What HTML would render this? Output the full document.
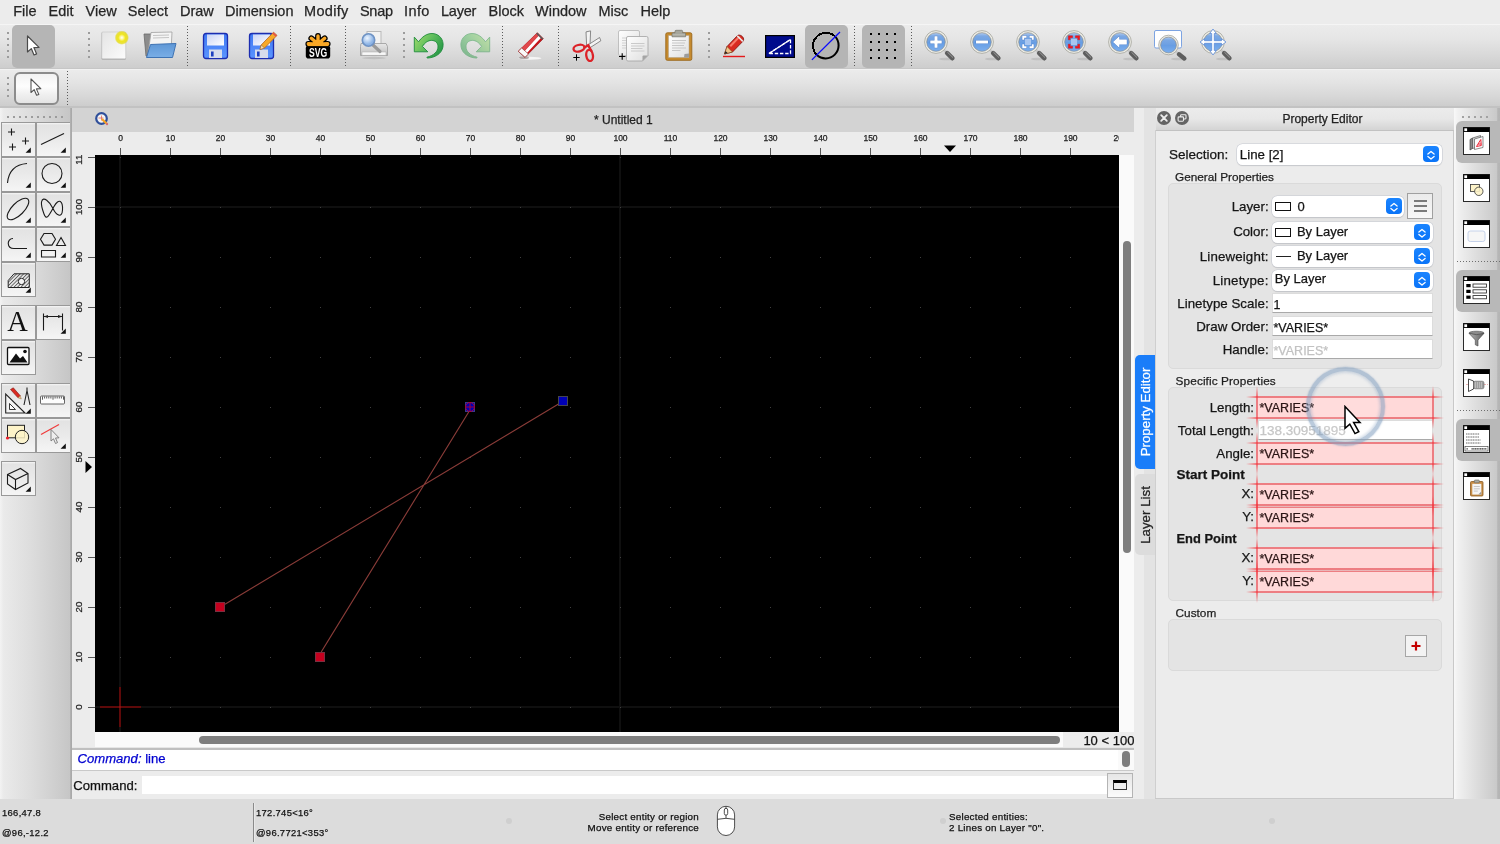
<!DOCTYPE html>
<html>
<head>
<meta charset="utf-8">
<title>QCAD</title>
<style>
*{box-sizing:border-box;margin:0;padding:0}
html,body{width:1500px;height:844px;overflow:hidden;background:#ececec;font-family:"Liberation Sans",sans-serif;color:#222;-webkit-text-stroke:.25px}
.abs{position:absolute}
#root{position:relative;width:1500px;height:844px;overflow:hidden;will-change:transform}
/* menu */
#menubar{left:0;top:0;width:1500px;height:24px;background:#ececec}
#menubar span{position:absolute;top:3px;font-size:14.5px;color:#262626;white-space:nowrap}
/* toolbars */
#tb1{left:0;top:24px;width:1500px;height:45px;background:linear-gradient(#ececec,#e5e5e5 35%,#d8d8d8 72%,#cdcdcd);border-bottom:1px solid #c6c6c6;box-shadow:inset 0 1px 0 #f5f5f5}
#tb2{left:0;top:69px;width:1500px;height:39px;background:linear-gradient(#ececec,#e4e4e4 35%,#d7d7d7 75%,#cdcdcd);border-bottom:2px solid #c2c2c2;box-shadow:inset 0 1px 0 #f2f2f2}
.sel{background:#b5b5b5;border-radius:5px}
.vdots{width:1px;background-image:repeating-linear-gradient(180deg,#5a5a5a 0,#5a5a5a 1px,transparent 1px,transparent 3px)}
.grip{width:2px;background-image:repeating-linear-gradient(180deg,#9c9c9c 0,#9c9c9c 2px,transparent 2px,transparent 6px)}
/* left panel */
#left{left:0;top:108px;width:72px;height:691px;background:linear-gradient(90deg,#f3f3f3 0,#eaeaea 5%,#dcdcdc 45%,#c6c6c6 97%)}
.tool{position:absolute;width:35px;height:35px;border:1px solid #999;background:linear-gradient(#f6f6f6 0,#e3e3e3 6%,#e9e9e9 45%,#f5f5f5 100%)}
.tool svg{position:absolute;left:0;top:0}
/* center */
#doctitle{left:72px;top:108px;width:1062px;height:24px;background:#d3d3d3}
#hruler{left:72px;top:132px;width:1047px;height:23px;background:#ececec}
#vruler{left:72px;top:155px;width:23px;height:577px;background:#ececec}
#canvas{left:95px;top:155px;width:1024px;height:577px;background:#000}
#vscroll{left:1119px;top:155px;width:15px;height:577px;background:#fafafa}
#hscroll{left:72px;top:732px;width:1062px;height:16px;background:#fafafa}
#hist{left:72px;top:748px;width:1062px;height:23px;background:#fff;border-top:2px solid #bfbfbf;border-bottom:1px solid #c9c9c9}
#cmd{left:72px;top:771px;width:1062px;height:28px;background:#ececec}
.rl{font-size:8.500px;text-align:center;color:#222;white-space:nowrap}
.rlv{font-size:9.700px;text-align:center;color:#222;white-space:nowrap;transform:rotate(-90deg);height:10px;line-height:10px}
#hruler,#vruler{overflow:hidden}
.st{font-size:9.400px;letter-spacing:.33px;color:#111;white-space:nowrap;line-height:12px}
.st2{font-size:9.800px;letter-spacing:.24px}
.dot{width:6px;height:6px;border-radius:3px;background:#cfcfcf}

#prop .lab{position:absolute;font-size:13.300px;color:#151515;white-space:nowrap;text-align:right;line-height:16px}
#prop .gl{position:absolute;font-size:11.800px;color:#1e1e1e;white-space:nowrap;line-height:14px}
#prop .gb{position:absolute;background:#e4e4e4;border:1px solid #dadada;border-radius:5px}
#prop .combo{position:absolute;background:#fff;border-radius:5.500px;box-shadow:0 0 0 .6px #c8ccd4,0 .5px 1px rgba(0,0,0,.16);font-size:13px;color:#151515;line-height:16px;white-space:nowrap}
#prop .cb{position:absolute;width:16px;height:16px;border-radius:4px;background:linear-gradient(#1a84ff,#0a74f8)}
#prop .inp{position:absolute;background:#fff;border:1px solid #dcdcdc;border-bottom-color:#a9a9a9;font-size:12.500px;color:#151515;line-height:16px;white-space:nowrap;padding:2.500px 0 0 .5px}
#prop .pink{position:absolute;background:#ffd9d9;font-size:12.500px;color:#2a1414;line-height:16px;white-space:nowrap}
#prop .hl{position:absolute;height:2px}
#prop .vl{position:absolute;width:2px}
/* right */
#tabs{left:1134px;top:108px;width:22px;height:691px;background:#ececec}
#prop{left:1156px;top:108px;width:298px;height:691px;background:#ececec}
#rtb{left:1454px;top:108px;width:46px;height:691px;background:linear-gradient(90deg,#f8f8f8 0,#f1f1f1 8%,#dfdfdf 45%,#c9c9c9 93%,#b6b6b6 95%,#b4b4b4 100%)}
#status{left:0;top:799px;width:1500px;height:45px;background:#dcdcdc}
</style>
</head>
<body>
<div id="root">
<div id="menubar" class="abs"><span style="left:13.200px">File</span><span style="left:48.5px">Edit</span><span style="left:85.5px">View</span><span style="left:127.800px">Select</span><span style="left:180px">Draw</span><span style="left:225px">Dimension</span><span style="left:304px;letter-spacing:.33px">Modify</span><span style="left:360px;letter-spacing:-.3px">Snap</span><span style="left:404px;letter-spacing:.4px">Info</span><span style="left:441px;letter-spacing:-.25px">Layer</span><span style="left:488.5px">Block</span><span style="left:535px">Window</span><span style="left:598.5px">Misc</span><span style="left:640.5px">Help</span></div>
<div id="tb1" class="abs">
<div class="abs grip" style="left:7px;top:8px;height:26px"></div>
<div class="abs sel" style="left:12px;top:1px;width:43px;height:43px"></div>
<svg class="abs" style="left:24px;top:10px" width="18" height="24" viewBox="0 0 18 24"><path d="M3.5 2 L3.5 18 L7.3 14.6 L10 21 L12.6 19.9 L9.9 13.6 L15 13.4 Z" fill="#fff" stroke="#4a4a4a" stroke-width="1.2" stroke-linejoin="round"/></svg>
<div class="abs grip" style="left:88px;top:8px;height:26px"></div>
<!-- new -->
<svg class="abs" style="left:99px;top:5px" width="32" height="34" viewBox="0 0 32 34">
<defs><linearGradient id="gpap" x1="0" y1="0" x2="1" y2="1"><stop offset="0" stop-color="#e4e4e4"/><stop offset="1" stop-color="#fcfcfc"/></linearGradient>
<radialGradient id="gsun"><stop offset="0" stop-color="#ffffff"/><stop offset=".22" stop-color="#fdf7a0"/><stop offset=".5" stop-color="#f0e61e"/><stop offset=".8" stop-color="#e6dc14" stop-opacity=".8"/><stop offset="1" stop-color="#e0d60a" stop-opacity="0"/></radialGradient></defs>
<rect x="2.500" y="3.300" width="24.500" height="27.500" rx="1.200" fill="#8a8a8a" opacity=".55"/>
<rect x="2.800" y="3" width="24" height="26.800" rx="1" fill="url(#gpap)" stroke="#bcbcbc" stroke-width=".5"/>
<circle cx="22.800" cy="8.700" r="7.200" fill="url(#gsun)"/></svg>
<!-- open -->
<svg class="abs" style="left:142px;top:6px" width="36" height="30" viewBox="0 0 36 30">
<defs><linearGradient id="gfold" x1="0" y1="0" x2="0" y2="1"><stop offset="0" stop-color="#5e97d6"/><stop offset="1" stop-color="#7aaee6"/></linearGradient></defs>
<path d="M2 4 h9 l2 2 h14 v20 H4 Z" fill="#8c8c8c" stroke="#6a6a6a" stroke-width=".8"/>
<path d="M9 2.5 L30 2 L29 22 L6 24 Z" fill="#f4f4f4" stroke="#a0a0a0" stroke-width=".8"/>
<path d="M11 5.5 L27 5 M11 8 L27 7.5" stroke="#c4c4c4" stroke-width="1"/>
<path d="M8.5 14.5 L34 13.5 L30.5 27.5 L4.5 27.5 Z" fill="url(#gfold)" stroke="#3f73b3" stroke-width="1"/></svg>
<div class="abs vdots" style="left:187px;top:2px;height:40px"></div>
<!-- save -->
<svg class="abs" style="left:202px;top:8px" width="28" height="28" viewBox="0 0 28 28">
<defs><linearGradient id="gsv" x1="0" y1="0" x2="0" y2="1"><stop offset="0" stop-color="#3f78f2"/><stop offset="1" stop-color="#5b95ff"/></linearGradient>
<linearGradient id="glab" x1="0" y1="0" x2="1" y2="1"><stop offset="0" stop-color="#c9d4f6"/><stop offset="1" stop-color="#ffffff"/></linearGradient></defs>
<rect x="1.5" y="1.5" width="24" height="25" rx="2.5" fill="url(#gsv)" stroke="#1c2db0" stroke-width="1.3"/>
<rect x="5" y="2.5" width="17" height="11" fill="url(#glab)"/>
<rect x="7" y="17.5" width="13" height="8.5" fill="#d6dcec"/>
<rect x="9" y="19.5" width="2.6" height="5" fill="#1c3fc0"/></svg>
<!-- save as -->
<svg class="abs" style="left:248px;top:6px" width="32" height="30" viewBox="0 0 32 30">
<rect x="1.5" y="3.5" width="24" height="25" rx="2.5" fill="url(#gsv)" stroke="#1c2db0" stroke-width="1.3"/>
<rect x="5" y="4.5" width="17" height="11" fill="url(#glab)"/>
<rect x="7" y="19.5" width="13" height="8.5" fill="#d6dcec"/>
<rect x="9" y="21.5" width="2.6" height="5" fill="#1c3fc0"/>
<path d="M12 19.5 L13.2 15 L25.5 2.2 L29 5.4 L16.5 18 Z" fill="#f7a928" stroke="#b5651d" stroke-width=".8"/>
<path d="M24.2 3.6 L27.6 6.8 L29 5.4 L25.5 2.2 Z" fill="#e2574c"/>
<path d="M12 19.5 L13.2 15 L16.5 18 Z" fill="#f3dcb4" stroke="#8a5a2a" stroke-width=".5"/></svg>
<div class="abs vdots" style="left:290px;top:2px;height:40px"></div>
<!-- svg -->
<svg class="abs" style="left:304px;top:8px" width="28" height="28" viewBox="0 0 28 28">
<path d="M14 12 L14 4 M14 12 L7.300 6.300 M14 12 L20.700 6.300 M14 12.300 L4.300 11.800 M14 12.300 L23.700 11.800" stroke="#000" stroke-width="5.800" stroke-linecap="round" fill="none"/>
<path d="M14 12 L14 4 M14 12 L7.300 6.300 M14 12 L20.700 6.300 M14 12.300 L4.300 11.800 M14 12.300 L23.700 11.800" stroke="#f9a826" stroke-width="3.400" stroke-linecap="round" fill="none"/>
<rect x="1.800" y="13.500" width="24.400" height="13" rx="2.800" fill="#000"/>
<path d="M3.500 13.300 h21" stroke="#f9a826" stroke-width="1.600"/>
<text transform="translate(14 25) scale(.82 1.180)" x="0" y="0" font-family="Liberation Sans" font-weight="700" font-size="10.500" fill="#fff" text-anchor="middle" style="-webkit-text-stroke:0">SVG</text></svg>
<div class="abs vdots" style="left:345px;top:2px;height:40px"></div>
<!-- print preview -->
<svg class="abs" style="left:358px;top:6px" width="32" height="30" viewBox="0 0 32 30">
<defs><linearGradient id="gprn" x1="0" y1="0" x2="0" y2="1"><stop offset="0" stop-color="#e8e8e8"/><stop offset="1" stop-color="#bdbdbd"/></linearGradient>
<radialGradient id="glens" cx=".4" cy=".35"><stop offset="0" stop-color="#eef6ff"/><stop offset="1" stop-color="#8db4e6"/></radialGradient></defs>
<rect x="9" y="1.5" width="14" height="14" fill="#f2f2f2" stroke="#b9b9b9"/>
<path d="M3 13.5 h25 l1.5 3 v9 h-27 v-9 Z" fill="url(#gprn)" stroke="#9a9a9a" stroke-width=".8"/>
<rect x="4" y="22" width="24" height="3.2" fill="#f8f8f8" stroke="#aaa" stroke-width=".5"/>
<ellipse cx="16" cy="28" rx="12" ry="1.2" fill="#b0b0b0" opacity=".6"/>
<path d="M15 15 L22 21.5" stroke="#9a9a9a" stroke-width="3.2" stroke-linecap="round"/>
<circle cx="10.5" cy="10" r="6.2" fill="url(#glens)" stroke="#6f93c4" stroke-width="1.6"/></svg>
<div class="abs grip" style="left:403px;top:8px;height:26px"></div>
<!-- undo -->
<svg class="abs" style="left:413px;top:8px" width="32" height="28" viewBox="0 0 32 28">
<defs><linearGradient id="gun" x1="0" y1="0" x2="1" y2=".6"><stop offset="0" stop-color="#a4dc6c"/><stop offset=".55" stop-color="#5cbc5c"/><stop offset="1" stop-color="#2a9a48"/></linearGradient></defs>
<path d="M1.300 5.100 L1.300 19.800 L14.800 19.800 L9.400 14.400 C12 10.500 15 8.400 18.500 8.400 C22.500 8.400 25.200 11 25 15 C24.800 19.500 21 23.500 13.900 25.200 L14.300 26.100 C24 25.500 30.500 20 30.100 12 C29.700 5.500 24.500 1.500 19 1.500 C13.500 1.500 9 5 5.500 9.800 Z" fill="url(#gun)" stroke="#1f8c3c" stroke-width=".9" stroke-linejoin="round"/></svg>
<!-- redo -->
<svg class="abs" style="left:459.300px;top:8px;opacity:.5" width="32" height="28" viewBox="0 0 32 28">
<g transform="translate(32,0) scale(-1,1)"><path d="M1.300 5.100 L1.300 19.800 L14.800 19.800 L9.400 14.400 C12 10.500 15 8.400 18.500 8.400 C22.500 8.400 25.200 11 25 15 C24.800 19.500 21 23.500 13.900 25.200 L14.300 26.100 C24 25.500 30.500 20 30.100 12 C29.700 5.500 24.500 1.500 19 1.500 C13.500 1.500 9 5 5.500 9.800 Z" fill="url(#gun)" stroke="#1f8c3c" stroke-width=".9" stroke-linejoin="round"/></g></svg>
<div class="abs vdots" style="left:502px;top:2px;height:40px"></div>
<!-- eraser -->
<svg class="abs" style="left:516px;top:7px" width="30" height="30" viewBox="0 0 30 30">
<ellipse cx="14" cy="27.300" rx="11.500" ry="1.500" fill="#fff" opacity=".75"/>
<ellipse cx="8" cy="26.800" rx="5" ry="1.200" fill="#7a6a6a" opacity=".55"/>
<path d="M21.300 1.700 L27.300 7.700 L9 26.300 L2.300 20.300 Z" fill="#c8141a" stroke="#9a1014" stroke-width=".6"/>
<path d="M21.300 1.700 L23.300 3.700 L5.500 23.100 L2.300 20.300 Z" fill="#e0484c"/>
<path d="M7.800 21 L23.100 4.300 L25.300 6.400 L10 23 Z" fill="#fff"/>
<path d="M21.300 1.700 L27.300 7.700 L26.200 8.800 L20.200 2.800 Z" fill="#5a5a5a"/>
<path d="M2.300 20.300 L5.700 17 L12.400 23 L9 26.300 Z" fill="#fafafa" stroke="#8c2a2a" stroke-width=".6"/></svg>
<div class="abs vdots" style="left:558px;top:2px;height:40px"></div>
<!-- cut -->
<svg class="abs" style="left:571px;top:6px" width="32" height="32" viewBox="0 0 32 32">
<path d="M15 1.900 L19.600 .9 L19 15 L17.700 17.500 L15.600 15 Z" fill="#f3f3f3" stroke="#6e6e6e" stroke-width=".8"/>
<path d="M17.700 14.500 L28.600 7.500 L29.800 10.800 L18.500 18 Z" fill="#f3f3f3" stroke="#6e6e6e" stroke-width=".8"/>
<path d="M13.500 17.500 L17.200 15.200 L19 18.500 L20.500 21" fill="none" stroke="#dc2228" stroke-width="2.400" stroke-linecap="round"/>
<ellipse cx="8" cy="18.200" rx="5.600" ry="3.300" transform="rotate(-14 8 18.200)" fill="none" stroke="#dc2228" stroke-width="2.300"/>
<ellipse cx="18.600" cy="25.500" rx="3.300" ry="5.600" transform="rotate(-9 18.600 25.500)" fill="none" stroke="#dc2228" stroke-width="2.300"/>
<path d="M2.300 27.500 h6.400 M5.500 24.300 v6.400" stroke="#000" stroke-width="1"/></svg>
<!-- copy -->
<svg class="abs" style="left:617px;top:5px" width="34" height="34" viewBox="0 0 34 34">
<defs><linearGradient id="gcp" x1="0" y1="0" x2="1" y2="1"><stop offset="0" stop-color="#ffffff"/><stop offset="1" stop-color="#dedede"/></linearGradient></defs>
<rect x="1.500" y="1.500" width="21" height="25" rx="1.500" fill="url(#gcp)" stroke="#b4b4b4" stroke-width=".8"/>
<path d="M5 9 h6 M5 11.500 h6 M5 14 h6 M5 16.500 h6 M5 19 h6" stroke="#d2d2d2" stroke-width="1"/>
<path d="M11 7.500 h18.500 a1.500 1.500 0 0 1 1.500 1.500 v17.500 l-5.500 5.500 h-14.500 a1.500 1.500 0 0 1 -1.500 -1.500 v-21.500 a1.500 1.500 0 0 1 1.500 -1.500 Z" fill="url(#gcp)" stroke="#a2a2a2" stroke-width=".8"/>
<path d="M31 26.500 h-4.500 a1 1 0 0 0 -1 1 v4.500 Z" fill="#a4a4a4"/>
<path d="M14 14.500 h13.500 M14 17 h13.500 M14 19.500 h11.500 M14 22 h13.500" stroke="#cacaca" stroke-width="1"/>
<path d="M2 27.500 h6.400 M5.200 24.300 v6.400" stroke="#000" stroke-width="1.100"/></svg>
<!-- paste -->
<svg class="abs" style="left:663px;top:5px" width="32" height="34" viewBox="0 0 32 34">
<rect x="2.800" y="3.800" width="26" height="27.500" rx="1.500" fill="#c58a2e" stroke="#9a661a" stroke-width=".9"/>
<rect x="5.500" y="6.500" width="20.500" height="22" fill="url(#gcp)" stroke="#b0a088" stroke-width=".5"/>
<path d="M9 11.500 h14 M9 14 h13 M9 16.500 h12 M9 19 h14 M9 21.500 h8.500" stroke="#c6c6c6" stroke-width="1"/>
<path d="M26 24.500 v4 h-5 l.5 -3.500 Z" fill="#9c9c9c"/>
<path d="M9 7.800 v-3 a1 1 0 0 1 1 -1 h2 v-1.500 a1 1 0 0 1 1 -1 h5.600 a1 1 0 0 1 1 1 v1.500 h2 a1 1 0 0 1 1 1 v3 Z" fill="#a6a69c" stroke="#74746a" stroke-width=".7"/>
<path d="M9.500 5.800 h12.600" stroke="#c4c4ba" stroke-width=".8"/></svg>
<div class="abs grip" style="left:708px;top:8px;height:26px"></div>
<!-- pencil red -->
<svg class="abs" style="left:722px;top:9px" width="25" height="26" viewBox="0 0 25 26">
<path d="M1 23.5 h22" stroke="#e41a1c" stroke-width="1.4"/>
<path d="M2.5 21 L5 13.5 L15.5 2.5 C17 1.5 19.3 2.3 20.6 3.8 C21.8 5.2 22 7 21 8.2 L10.5 19 Z" fill="#d92a21" stroke="#7d1712" stroke-width=".8"/>
<path d="M7.5 12.5 L16.5 3.2 L18.5 4 L9 14 Z" fill="#ff8d7d" opacity=".8"/>
<path d="M15.2 2.8 L20.8 8.4" stroke="#e9e9e9" stroke-width="1.6"/>
<path d="M2.5 21 L5 13.5 L10.5 19 Z" fill="#eec58c" stroke="#7d4a1a" stroke-width=".6"/>
<path d="M2.5 21 L3.5 18 L5.6 20 Z" fill="#222"/></svg>
<!-- blue preview -->
<svg class="abs" style="left:765px;top:11px" width="30" height="23" viewBox="0 0 30 23">
<rect x=".6" y=".6" width="28.8" height="21.8" fill="#000b8c" stroke="#000" stroke-width="1.2"/>
<path d="M4 18.5 L25.5 4.5 L25.5 18.5 Z" fill="none" stroke="#fff" stroke-width="1.3" stroke-dasharray="3.4 1.8"/>
<path d="M4 18.5 L25.5 4.5" stroke="#fff" stroke-width="1.3"/></svg>
<div class="abs sel" style="left:805px;top:1px;width:43px;height:43px"></div>
<svg class="abs" style="left:810px;top:6px" width="32" height="32" viewBox="0 0 32 32">
<path d="M6.61 24.79 A13 13 0 0 1 24.99 6.41" fill="none" stroke="#000" stroke-width="2" shape-rendering="crispEdges"/>
<path d="M24.99 6.41 A13 13 0 0 1 6.61 24.79" fill="none" stroke="#000" stroke-width="2"/>
<path d="M1.900 29.900 L30 2" stroke="#0a0aff" stroke-width="1.300"/></svg>
<div class="abs vdots" style="left:854px;top:2px;height:40px"></div>
<div class="abs sel" style="left:862px;top:1px;width:43px;height:43px"></div>
<svg class="abs" style="left:870px;top:9px" width="28" height="28" viewBox="0 0 28 28" shape-rendering="crispEdges"><path d="M0 0h2v2h-2zM8 0h2v2h-2zM16 0h2v2h-2zM24 0h2v2h-2zM0 8h2v2h-2zM8 8h2v2h-2zM16 8h2v2h-2zM24 8h2v2h-2zM0 16h2v2h-2zM8 16h2v2h-2zM16 16h2v2h-2zM24 16h2v2h-2zM0 24h2v2h-2zM8 24h2v2h-2zM16 24h2v2h-2zM24 24h2v2h-2z" fill="#000"/></svg>
<div class="abs vdots" style="left:911px;top:2px;height:40px"></div>
<svg class="abs" width="0" height="0"><defs><linearGradient id="gzl" x1="0" y1="0" x2="0" y2="1"><stop offset="0" stop-color="#b4cdf0"/><stop offset=".18" stop-color="#7ba8e4"/><stop offset=".5" stop-color="#6c9fe2"/><stop offset="1" stop-color="#8dbbf2"/></linearGradient></defs></svg><svg class="abs" style="left:923px;top:4px" width="34" height="34" viewBox="0 0 34 34">
<ellipse cx="24" cy="31" rx="8" ry="1.300" fill="#9a9a9a" opacity=".35"/>
<path d="M20.500 21.500 L24 25" stroke="#c9c9c9" stroke-width="2.600" stroke-linecap="round"/>
<path d="M24.200 25.200 L29.300 30.200" stroke="#5e5e5e" stroke-width="4.600" stroke-linecap="round"/>
<path d="M24.600 24.300 L29.800 29.400" stroke="#9a9a9a" stroke-width="1" stroke-linecap="round"/>
<circle cx="13" cy="14" r="11.400" fill="#ecece6" stroke="#a3a39b" stroke-width=".8"/>
<circle cx="13" cy="14" r="9.300" fill="url(#gzl)" stroke="#8e8e86" stroke-width=".7"/>
<path d="M3.800 14 A9.200 9.200 0 0 0 22.200 14 Z" fill="#5c98e6" opacity=".35"/>
<path d="M7.300 12.500 h4.200 v-4.200 h3 v4.200 h4.200 v3 h-4.200 v4.200 h-3 v-4.200 h-4.200 Z" fill="#fff" stroke="#3f6fb8" stroke-width=".6" paint-order="stroke"/></svg><svg class="abs" style="left:969px;top:4px" width="34" height="34" viewBox="0 0 34 34">
<ellipse cx="24" cy="31" rx="8" ry="1.300" fill="#9a9a9a" opacity=".35"/>
<path d="M20.500 21.500 L24 25" stroke="#c9c9c9" stroke-width="2.600" stroke-linecap="round"/>
<path d="M24.200 25.200 L29.300 30.200" stroke="#5e5e5e" stroke-width="4.600" stroke-linecap="round"/>
<path d="M24.600 24.300 L29.800 29.400" stroke="#9a9a9a" stroke-width="1" stroke-linecap="round"/>
<circle cx="13" cy="14" r="11.400" fill="#ecece6" stroke="#a3a39b" stroke-width=".8"/>
<circle cx="13" cy="14" r="9.300" fill="url(#gzl)" stroke="#8e8e86" stroke-width=".7"/>
<path d="M3.800 14 A9.200 9.200 0 0 0 22.200 14 Z" fill="#5c98e6" opacity=".35"/>
<path d="M7 12.500 h12 v3 h-12 Z" fill="#fff" stroke="#3f6fb8" stroke-width=".6" paint-order="stroke"/></svg><svg class="abs" style="left:1015px;top:4px" width="34" height="34" viewBox="0 0 34 34">
<ellipse cx="24" cy="31" rx="8" ry="1.300" fill="#9a9a9a" opacity=".35"/>
<path d="M20.500 21.500 L24 25" stroke="#c9c9c9" stroke-width="2.600" stroke-linecap="round"/>
<path d="M24.200 25.200 L29.300 30.200" stroke="#5e5e5e" stroke-width="4.600" stroke-linecap="round"/>
<path d="M24.600 24.300 L29.800 29.400" stroke="#9a9a9a" stroke-width="1" stroke-linecap="round"/>
<circle cx="13" cy="14" r="11.400" fill="#ecece6" stroke="#a3a39b" stroke-width=".8"/>
<circle cx="13" cy="14" r="9.300" fill="url(#gzl)" stroke="#8e8e86" stroke-width=".7"/>
<path d="M3.800 14 A9.200 9.200 0 0 0 22.200 14 Z" fill="#5c98e6" opacity=".35"/>
<rect x="10" y="11" width="6" height="6" fill="#a9c6f0"/><path d="M7.300 11.800 v-4 h4.200 v1.900 h-2.300 v2.100 Z M14.500 7.800 h4.200 v4 h-1.900 v-2.100 h-2.300 Z M18.700 16.200 v4 h-4.200 v-1.900 h2.300 v-2.100 Z M11.500 20.200 h-4.200 v-4 h1.900 v2.100 h2.300 Z" fill="#fff" stroke="#3f6fb8" stroke-width=".6" paint-order="stroke"/></svg><svg class="abs" style="left:1061px;top:4px" width="34" height="34" viewBox="0 0 34 34">
<ellipse cx="24" cy="31" rx="8" ry="1.300" fill="#9a9a9a" opacity=".35"/>
<path d="M20.500 21.500 L24 25" stroke="#c9c9c9" stroke-width="2.600" stroke-linecap="round"/>
<path d="M24.200 25.200 L29.300 30.200" stroke="#5e5e5e" stroke-width="4.600" stroke-linecap="round"/>
<path d="M24.600 24.300 L29.800 29.400" stroke="#9a9a9a" stroke-width="1" stroke-linecap="round"/>
<circle cx="13" cy="14" r="11.400" fill="#ecece6" stroke="#a3a39b" stroke-width=".8"/>
<circle cx="13" cy="14" r="9.300" fill="url(#gzl)" stroke="#8e8e86" stroke-width=".7"/>
<path d="M3.800 14 A9.200 9.200 0 0 0 22.200 14 Z" fill="#5c98e6" opacity=".35"/>
<rect x="10" y="11" width="6" height="6" fill="#a9c6f0"/><path d="M7.300 11.800 v-4 h4.200 v1.900 h-2.300 v2.100 Z M14.500 7.800 h4.200 v4 h-1.900 v-2.100 h-2.300 Z M18.700 16.200 v4 h-4.200 v-1.900 h2.300 v-2.100 Z M11.500 20.200 h-4.200 v-4 h1.900 v2.100 h2.300 Z" fill="#f0141c" stroke="#a00" stroke-width=".4" paint-order="stroke"/></svg><svg class="abs" style="left:1107px;top:4px" width="34" height="34" viewBox="0 0 34 34">
<ellipse cx="24" cy="31" rx="8" ry="1.300" fill="#9a9a9a" opacity=".35"/>
<path d="M20.500 21.500 L24 25" stroke="#c9c9c9" stroke-width="2.600" stroke-linecap="round"/>
<path d="M24.200 25.200 L29.300 30.200" stroke="#5e5e5e" stroke-width="4.600" stroke-linecap="round"/>
<path d="M24.600 24.300 L29.800 29.400" stroke="#9a9a9a" stroke-width="1" stroke-linecap="round"/>
<circle cx="13" cy="14" r="11.400" fill="#ecece6" stroke="#a3a39b" stroke-width=".8"/>
<circle cx="13" cy="14" r="9.300" fill="url(#gzl)" stroke="#8e8e86" stroke-width=".7"/>
<path d="M3.800 14 A9.200 9.200 0 0 0 22.200 14 Z" fill="#5c98e6" opacity=".35"/>
<path d="M6 14 L12.300 8.200 V11.600 H19.800 V16.400 H12.300 V19.800 Z" fill="#fff" stroke="#3f6fb8" stroke-width=".6" paint-order="stroke"/></svg><svg class="abs" style="left:1153px;top:4px" width="40" height="34" viewBox="0 0 40 34">
<rect x="1.500" y="2.500" width="27" height="17.500" rx="1.500" fill="#fff" stroke="#6f9be0" stroke-width=".9"/>
<ellipse cx="26" cy="31" rx="8" ry="1.300" fill="#9a9a9a" opacity=".35"/>
<path d="M22 23 L26 26.300" stroke="#c9c9c9" stroke-width="2.600" stroke-linecap="round"/>
<path d="M26 26.300 L31.300 30.500" stroke="#5e5e5e" stroke-width="4.400" stroke-linecap="round"/>
<circle cx="15.500" cy="17" r="9.800" fill="#ecece6" stroke="#a3a39b" stroke-width=".8"/>
<circle cx="15.500" cy="17" r="7.900" fill="url(#gzl)" stroke="#8e8e86" stroke-width=".7"/>
<path d="M7.700 17 A7.800 7.800 0 0 0 23.300 17 Z" fill="#5c98e6" opacity=".35"/></svg><svg class="abs" style="left:1200px;top:4px" width="34" height="34" viewBox="0 0 34 34">
<ellipse cx="24" cy="31" rx="8" ry="1.300" fill="#9a9a9a" opacity=".35"/>
<path d="M20.500 21.500 L24 25" stroke="#c9c9c9" stroke-width="2.600" stroke-linecap="round"/>
<path d="M24.200 25.200 L29.300 30.200" stroke="#5e5e5e" stroke-width="4.600" stroke-linecap="round"/>
<path d="M24.600 24.300 L29.800 29.400" stroke="#9a9a9a" stroke-width="1" stroke-linecap="round"/>
<circle cx="13" cy="14" r="11.400" fill="#ecece6" stroke="#a3a39b" stroke-width=".8"/>
<circle cx="13" cy="14" r="9.300" fill="url(#gzl)" stroke="#8e8e86" stroke-width=".7"/>
<path d="M3.800 14 A9.200 9.200 0 0 0 22.200 14 Z" fill="#5c98e6" opacity=".35"/>
<path d="M13 1 L16.300 5.500 H14.300 V12.700 H21.500 V10.700 L26 14 L21.500 17.300 V15.300 H14.300 V22.500 H16.300 L13 27 L9.700 22.500 H11.700 V15.300 H4.500 V17.300 L0 14 L4.500 10.700 V12.700 H11.700 V5.500 H9.700 Z" fill="#fff" stroke="#5c8cd8" stroke-width=".8"/></svg>
</div>
<div id="tb2" class="abs">
<div class="abs grip" style="left:7px;top:8px;height:20px"></div>
<div class="abs" style="left:14px;top:3px;width:45px;height:33px;border:2px solid #8c8c8c;border-radius:6px;background:linear-gradient(#f2f2f2,#fdfdfd 42%,#f0f0f0 70%,#e4e4e4)"></div>
<svg class="abs" style="left:28px;top:8px" width="16" height="22" viewBox="0 0 16 22"><path d="M3 2 L3 15.500 L6.200 12.700 L8.600 18.300 L10.800 17.400 L8.400 11.900 L12.800 11.700 Z" fill="#fff" stroke="#555" stroke-width="1.100" stroke-linejoin="round"/></svg>
<div class="abs vdots" style="left:67px;top:2px;height:34px"></div>
</div>
<div id="left" class="abs"><div class="abs" style="left:7px;top:8px;width:58px;height:2px;background-image:repeating-linear-gradient(90deg,#9c9c9c 0,#9c9c9c 2px,transparent 2px,transparent 6px)"></div><div class="tool" style="left:1px;top:14px"><svg width="34" height="34" viewBox="0 0 34 34" style="left:-1px;top:-.5px"><path d="M7 9 h7 M10.500 5.500 v7 M21 18 h7 M24.500 14.500 v7 M8 24 h7 M11.500 20.500 v7" fill="none" stroke="#1a1a1a" stroke-width="1.1" stroke-width="1.100"/><path d="M29.800 24.600 V29.800 H24.600 Z" fill="#111"/></svg></div><div class="tool" style="left:36px;top:14px"><svg width="34" height="34" viewBox="0 0 34 34" style="left:-1px;top:-.5px"><path d="M5 21.500 L28 10.500" fill="none" stroke="#1a1a1a" stroke-width="1.1"/><path d="M29.800 24.600 V29.800 H24.600 Z" fill="#111"/></svg></div><div class="tool" style="left:1px;top:49px"><svg width="34" height="34" viewBox="0 0 34 34" style="left:-1px;top:-.5px"><path d="M6.500 25 C7.500 14 14 6.500 26 5.500" fill="none" stroke="#1a1a1a" stroke-width="1.1"/><path d="M29.800 24.600 V29.800 H24.600 Z" fill="#111"/></svg></div><div class="tool" style="left:36px;top:49px"><svg width="34" height="34" viewBox="0 0 34 34" style="left:-1px;top:-.5px"><circle cx="16" cy="15.500" r="10" fill="none" stroke="#1a1a1a" stroke-width="1.1"/><path d="M29.800 24.600 V29.800 H24.600 Z" fill="#111"/></svg></div><div class="tool" style="left:1px;top:84px"><svg width="34" height="34" viewBox="0 0 34 34" style="left:-1px;top:-.5px"><ellipse cx="17" cy="16" rx="14" ry="6" transform="rotate(-45 17 16)" fill="none" stroke="#1a1a1a" stroke-width="1.1"/><path d="M29.800 24.600 V29.800 H24.600 Z" fill="#111"/></svg></div><div class="tool" style="left:36px;top:84px"><svg width="34" height="34" viewBox="0 0 34 34" style="left:-1px;top:-.5px"><path d="M5.500 9 C7 2 14 9 17 15.500 C20 22 26 26 26.500 17 C27 8 23 4.500 18 13.500 C13 22.500 10.500 28 8 21 C6 15.500 5 12 5.500 9 Z" fill="none" stroke="#1a1a1a" stroke-width="1.1"/><path d="M29.800 24.600 V29.800 H24.600 Z" fill="#111"/></svg></div><div class="tool" style="left:1px;top:119px"><svg width="34" height="34" viewBox="0 0 34 34" style="left:-1px;top:-.5px"><path d="M12 10.500 C5.500 10.500 5.500 20.500 13 20.500 H26" fill="none" stroke="#1a1a1a" stroke-width="1.1"/><path d="M29.800 24.600 V29.800 H24.600 Z" fill="#111"/></svg></div><div class="tool" style="left:36px;top:119px"><svg width="34" height="34" viewBox="0 0 34 34" style="left:-1px;top:-.5px"><path d="M8 5.500 h8 l3.500 5.800 l-3.500 5.800 h-8 l-3.500 -5.800 Z M25 9.500 l4.500 8 h-9 Z M5.500 22.500 h14 v6.500 h-14 Z" fill="none" stroke="#1a1a1a" stroke-width="1.1"/><path d="M29.800 24.600 V29.800 H24.600 Z" fill="#111"/></svg></div><div class="tool" style="left:1px;top:154px"><svg width="34" height="34" viewBox="0 0 34 34" style="left:-1px;top:-.5px"><defs><pattern id="hat" width="2.500" height="2.500" patternUnits="userSpaceOnUse" patternTransform="rotate(-45)"><path d="M0 1.200 h3" stroke="#333" stroke-width=".7"/></pattern></defs><path d="M13 10.800 H28.300 V24.500 H7.200 V17.500 Z" fill="url(#hat)" stroke="#222" stroke-width="1"/><circle cx="20.500" cy="18.500" r="3.200" fill="#f4f4f4" stroke="#222" stroke-width="1"/><path d="M29.800 24.600 V29.800 H24.600 Z" fill="#111"/></svg></div><div class="tool" style="left:1px;top:197px"><svg width="34" height="34" viewBox="0 0 34 34" style="left:-1px;top:-1.800px"><text x="16.500" y="27" font-family="Liberation Serif" font-size="28.500" text-anchor="middle" fill="#111">A</text></svg></div><div class="tool" style="left:36px;top:197px"><svg width="34" height="34" viewBox="0 0 34 34" style="left:-1px;top:-1.800px"><path d="M7.500 26.500 V9.500 M26.500 26.500 V9.500 M7.500 12.500 H26.500" fill="none" stroke="#1a1a1a" stroke-width="1.1"/><path d="M7.500 12.500 l4.500 -1.600 v3.200 Z M26.500 12.500 l-4.500 -1.600 v3.200 Z" fill="#222"/><path d="M29.800 24.600 V29.800 H24.600 Z" fill="#111"/></svg></div><div class="tool" style="left:1px;top:232px"><svg width="34" height="34" viewBox="0 0 34 34" style="left:-1px;top:-1.800px"><rect x="6.500" y="8.500" width="21.500" height="17" rx="1" fill="#fff" stroke="#111" stroke-width="1.300"/><path d="M8.500 23.500 L15 14.500 L19 19.500 L22 17 L26.500 23.500 Z" fill="#111"/><circle cx="24" cy="12.500" r="1.800" fill="#111"/></svg></div><div class="tool" style="left:1px;top:275px"><svg width="34" height="34" viewBox="0 0 34 34" style="left:-1px;top:-.5px"><path d="M4.700 10 V29 H24 Z" fill="#f4f4f4" stroke="#222" stroke-width="1.100"/><path d="M8.500 19.500 V25.500 H14.500 Z" fill="#fff" stroke="#222" stroke-width=".9"/><path d="M9.500 5.500 L12.300 3.800 L19.300 11.800 L17 13.800 Z" fill="#d92a21" stroke="#7d1712" stroke-width=".6"/><path d="M17 13.800 L19.300 11.800 L20.300 15 Z" fill="#eec58c" stroke="#8a5a2a" stroke-width=".4"/><path d="M26 6.500 L23 21 M26 6.500 L29 21 M26 3.500 v4" stroke="#222" stroke-width="1.100" fill="none"/><path d="M29.800 24.600 V29.800 H24.600 Z" fill="#111"/></svg></div><div class="tool" style="left:36px;top:275px"><svg width="34" height="34" viewBox="0 0 34 34" style="left:-1px;top:-.5px"><rect x="4.500" y="12" width="24" height="8" rx="1" fill="#fcfcfc" stroke="#555" stroke-width=".9"/><path d="M6.5 12.500 v3.2 M8.6 12.500 v2 M10.7 12.500 v2 M12.8 12.500 v2 M14.9 12.500 v2 M17.0 12.500 v3.2 M19.1 12.500 v2 M21.2 12.500 v2 M23.3 12.500 v2 M25.4 12.500 v2 M27.5 12.500 v3.2" stroke="#333" stroke-width=".8"/></svg></div><div class="tool" style="left:1px;top:310px"><svg width="34" height="34" viewBox="0 0 34 34" style="left:-1px;top:-.5px"><rect x="6.500" y="6.300" width="17" height="12.500" fill="#fdf3c8" stroke="#222"/><circle cx="21" cy="18" r="6.700" fill="#fdf3c8" fill-opacity=".85" stroke="#222"/><circle cx="6.500" cy="19" r="1.600" fill="#f0202a"/></svg></div><div class="tool" style="left:36px;top:310px"><svg width="34" height="34" viewBox="0 0 34 34" style="left:-1px;top:-.5px"><path d="M5 15.500 L23 5.500" stroke="#f03a3a" stroke-width="1.200"/><path d="M15 10.500 V22 L17.500 19.800 L19.500 24.500 L21.500 23.600 L19.500 19 L23 18.800 Z" fill="#eee" stroke="#777" stroke-width=".9"/><path d="M29.800 24.600 V29.800 H24.600 Z" fill="#111"/></svg></div><div class="tool" style="left:1px;top:353px"><svg width="34" height="34" viewBox="0 0 34 34" style="left:-1px;top:-.5px"><path d="M6.500 12.500 L19.500 6.500 L27 11.500 V21 L14.500 27.500 L6.500 22 Z M6.500 12.500 L14.500 17.500 L27 11.500 M14.500 17.500 V27.500" fill="none" stroke="#1a1a1a" stroke-width="1.1" stroke-width="1.100"/><path d="M29.800 24.600 V29.800 H24.600 Z" fill="#111"/></svg></div><div class="abs" style="left:70px;top:0;width:2px;height:692px;background:linear-gradient(90deg,#b4b4b4,#a6a6a6)"></div></div>
<div id="doctitle" class="abs"><span class="abs" style="left:522px;top:5px;font-size:12px;line-height:14px;color:#222;white-space:nowrap">* Untitled 1</span>
<svg class="abs" style="left:22px;top:3px" width="16" height="16" viewBox="0 0 16 16"><circle cx="7.500" cy="7.500" r="5.300" fill="#f4f4f4" stroke="#2f4f9a" stroke-width="2.200"/><path d="M4.500 7 h5 M7.500 4.500 v5" stroke="#e05a4a" stroke-width=".7"/><path d="M8 8 L12.500 12.500" stroke="#f4a322" stroke-width="2.200"/><circle cx="13" cy="13" r="1.200" fill="#d87070"/></svg></div>
<div id="hruler" class="abs"><div class="abs" style="left:48px;top:16px;width:1px;height:7px;background:#555"></div><span class="abs rl" style="top:1px;left:28px;width:41px">0</span><div class="abs" style="left:98px;top:16px;width:1px;height:7px;background:#555"></div><span class="abs rl" style="top:1px;left:78px;width:41px">10</span><div class="abs" style="left:148px;top:16px;width:1px;height:7px;background:#555"></div><span class="abs rl" style="top:1px;left:128px;width:41px">20</span><div class="abs" style="left:198px;top:16px;width:1px;height:7px;background:#555"></div><span class="abs rl" style="top:1px;left:178px;width:41px">30</span><div class="abs" style="left:248px;top:16px;width:1px;height:7px;background:#555"></div><span class="abs rl" style="top:1px;left:228px;width:41px">40</span><div class="abs" style="left:298px;top:16px;width:1px;height:7px;background:#555"></div><span class="abs rl" style="top:1px;left:278px;width:41px">50</span><div class="abs" style="left:348px;top:16px;width:1px;height:7px;background:#555"></div><span class="abs rl" style="top:1px;left:328px;width:41px">60</span><div class="abs" style="left:398px;top:16px;width:1px;height:7px;background:#555"></div><span class="abs rl" style="top:1px;left:378px;width:41px">70</span><div class="abs" style="left:448px;top:16px;width:1px;height:7px;background:#555"></div><span class="abs rl" style="top:1px;left:428px;width:41px">80</span><div class="abs" style="left:498px;top:16px;width:1px;height:7px;background:#555"></div><span class="abs rl" style="top:1px;left:478px;width:41px">90</span><div class="abs" style="left:548px;top:16px;width:1px;height:7px;background:#555"></div><span class="abs rl" style="top:1px;left:528px;width:41px">100</span><div class="abs" style="left:598px;top:16px;width:1px;height:7px;background:#555"></div><span class="abs rl" style="top:1px;left:578px;width:41px">110</span><div class="abs" style="left:648px;top:16px;width:1px;height:7px;background:#555"></div><span class="abs rl" style="top:1px;left:628px;width:41px">120</span><div class="abs" style="left:698px;top:16px;width:1px;height:7px;background:#555"></div><span class="abs rl" style="top:1px;left:678px;width:41px">130</span><div class="abs" style="left:748px;top:16px;width:1px;height:7px;background:#555"></div><span class="abs rl" style="top:1px;left:728px;width:41px">140</span><div class="abs" style="left:798px;top:16px;width:1px;height:7px;background:#555"></div><span class="abs rl" style="top:1px;left:778px;width:41px">150</span><div class="abs" style="left:848px;top:16px;width:1px;height:7px;background:#555"></div><span class="abs rl" style="top:1px;left:828px;width:41px">160</span><div class="abs" style="left:898px;top:16px;width:1px;height:7px;background:#555"></div><span class="abs rl" style="top:1px;left:878px;width:41px">170</span><div class="abs" style="left:948px;top:16px;width:1px;height:7px;background:#555"></div><span class="abs rl" style="top:1px;left:928px;width:41px">180</span><div class="abs" style="left:998px;top:16px;width:1px;height:7px;background:#555"></div><span class="abs rl" style="top:1px;left:978px;width:41px">190</span><div class="abs" style="left:1048px;top:16px;width:1px;height:7px;background:#555"></div><span class="abs rl" style="top:1px;left:1028px;width:41px">200</span><svg class="abs" style="left:872px;top:12.500px" width="12" height="8" viewBox="0 0 12 8"><path d="M0 .5 H12 L6 7 Z" fill="#000"/></svg></div>
<div id="vruler" class="abs"><div class="abs" style="left:16px;top:552px;width:7px;height:1px;background:#555"></div><span class="abs rlv" style="left:-14.500px;top:547px;width:41px">0</span><div class="abs" style="left:16px;top:502px;width:7px;height:1px;background:#555"></div><span class="abs rlv" style="left:-14.500px;top:497px;width:41px">10</span><div class="abs" style="left:16px;top:452px;width:7px;height:1px;background:#555"></div><span class="abs rlv" style="left:-14.500px;top:447px;width:41px">20</span><div class="abs" style="left:16px;top:402px;width:7px;height:1px;background:#555"></div><span class="abs rlv" style="left:-14.500px;top:397px;width:41px">30</span><div class="abs" style="left:16px;top:352px;width:7px;height:1px;background:#555"></div><span class="abs rlv" style="left:-14.500px;top:347px;width:41px">40</span><div class="abs" style="left:16px;top:302px;width:7px;height:1px;background:#555"></div><span class="abs rlv" style="left:-14.500px;top:297px;width:41px">50</span><div class="abs" style="left:16px;top:252px;width:7px;height:1px;background:#555"></div><span class="abs rlv" style="left:-14.500px;top:247px;width:41px">60</span><div class="abs" style="left:16px;top:202px;width:7px;height:1px;background:#555"></div><span class="abs rlv" style="left:-14.500px;top:197px;width:41px">70</span><div class="abs" style="left:16px;top:152px;width:7px;height:1px;background:#555"></div><span class="abs rlv" style="left:-14.500px;top:147px;width:41px">80</span><div class="abs" style="left:16px;top:102px;width:7px;height:1px;background:#555"></div><span class="abs rlv" style="left:-14.500px;top:97px;width:41px">90</span><div class="abs" style="left:16px;top:52px;width:7px;height:1px;background:#555"></div><span class="abs rlv" style="left:-14.500px;top:47px;width:41px">100</span><div class="abs" style="left:16px;top:2px;width:7px;height:1px;background:#555"></div><span class="abs rlv" style="left:-14.500px;top:-3px;width:41px">110</span><svg class="abs" style="left:13px;top:306px" width="8" height="12" viewBox="0 0 8 12"><path d="M.5 0 V12 L7 6 Z" fill="#000"/></svg></div>
<div id="canvas" class="abs"><svg class="abs" style="left:0;top:0" width="1024" height="577" viewBox="0 0 1024 577" shape-rendering="auto"><rect x="24" y="0" width="2" height="577" fill="#0f0f0f"/><rect x="524" y="0" width="2" height="577" fill="#0f0f0f"/><rect x="0" y="551" width="1024" height="2" fill="#0f0f0f"/><rect x="0" y="51" width="1024" height="2" fill="#0f0f0f"/><path d="M25 552h1v1h-1zM25 502h1v1h-1zM25 452h1v1h-1zM25 402h1v1h-1zM25 352h1v1h-1zM25 302h1v1h-1zM25 252h1v1h-1zM25 202h1v1h-1zM25 152h1v1h-1zM25 102h1v1h-1zM25 52h1v1h-1zM25 2h1v1h-1zM75 552h1v1h-1zM75 502h1v1h-1zM75 452h1v1h-1zM75 402h1v1h-1zM75 352h1v1h-1zM75 302h1v1h-1zM75 252h1v1h-1zM75 202h1v1h-1zM75 152h1v1h-1zM75 102h1v1h-1zM75 52h1v1h-1zM75 2h1v1h-1zM125 552h1v1h-1zM125 502h1v1h-1zM125 452h1v1h-1zM125 402h1v1h-1zM125 352h1v1h-1zM125 302h1v1h-1zM125 252h1v1h-1zM125 202h1v1h-1zM125 152h1v1h-1zM125 102h1v1h-1zM125 52h1v1h-1zM125 2h1v1h-1zM175 552h1v1h-1zM175 502h1v1h-1zM175 452h1v1h-1zM175 402h1v1h-1zM175 352h1v1h-1zM175 302h1v1h-1zM175 252h1v1h-1zM175 202h1v1h-1zM175 152h1v1h-1zM175 102h1v1h-1zM175 52h1v1h-1zM175 2h1v1h-1zM225 552h1v1h-1zM225 502h1v1h-1zM225 452h1v1h-1zM225 402h1v1h-1zM225 352h1v1h-1zM225 302h1v1h-1zM225 252h1v1h-1zM225 202h1v1h-1zM225 152h1v1h-1zM225 102h1v1h-1zM225 52h1v1h-1zM225 2h1v1h-1zM275 552h1v1h-1zM275 502h1v1h-1zM275 452h1v1h-1zM275 402h1v1h-1zM275 352h1v1h-1zM275 302h1v1h-1zM275 252h1v1h-1zM275 202h1v1h-1zM275 152h1v1h-1zM275 102h1v1h-1zM275 52h1v1h-1zM275 2h1v1h-1zM325 552h1v1h-1zM325 502h1v1h-1zM325 452h1v1h-1zM325 402h1v1h-1zM325 352h1v1h-1zM325 302h1v1h-1zM325 252h1v1h-1zM325 202h1v1h-1zM325 152h1v1h-1zM325 102h1v1h-1zM325 52h1v1h-1zM325 2h1v1h-1zM375 552h1v1h-1zM375 502h1v1h-1zM375 452h1v1h-1zM375 402h1v1h-1zM375 352h1v1h-1zM375 302h1v1h-1zM375 252h1v1h-1zM375 202h1v1h-1zM375 152h1v1h-1zM375 102h1v1h-1zM375 52h1v1h-1zM375 2h1v1h-1zM425 552h1v1h-1zM425 502h1v1h-1zM425 452h1v1h-1zM425 402h1v1h-1zM425 352h1v1h-1zM425 302h1v1h-1zM425 252h1v1h-1zM425 202h1v1h-1zM425 152h1v1h-1zM425 102h1v1h-1zM425 52h1v1h-1zM425 2h1v1h-1zM475 552h1v1h-1zM475 502h1v1h-1zM475 452h1v1h-1zM475 402h1v1h-1zM475 352h1v1h-1zM475 302h1v1h-1zM475 252h1v1h-1zM475 202h1v1h-1zM475 152h1v1h-1zM475 102h1v1h-1zM475 52h1v1h-1zM475 2h1v1h-1zM525 552h1v1h-1zM525 502h1v1h-1zM525 452h1v1h-1zM525 402h1v1h-1zM525 352h1v1h-1zM525 302h1v1h-1zM525 252h1v1h-1zM525 202h1v1h-1zM525 152h1v1h-1zM525 102h1v1h-1zM525 52h1v1h-1zM525 2h1v1h-1zM575 552h1v1h-1zM575 502h1v1h-1zM575 452h1v1h-1zM575 402h1v1h-1zM575 352h1v1h-1zM575 302h1v1h-1zM575 252h1v1h-1zM575 202h1v1h-1zM575 152h1v1h-1zM575 102h1v1h-1zM575 52h1v1h-1zM575 2h1v1h-1zM625 552h1v1h-1zM625 502h1v1h-1zM625 452h1v1h-1zM625 402h1v1h-1zM625 352h1v1h-1zM625 302h1v1h-1zM625 252h1v1h-1zM625 202h1v1h-1zM625 152h1v1h-1zM625 102h1v1h-1zM625 52h1v1h-1zM625 2h1v1h-1zM675 552h1v1h-1zM675 502h1v1h-1zM675 452h1v1h-1zM675 402h1v1h-1zM675 352h1v1h-1zM675 302h1v1h-1zM675 252h1v1h-1zM675 202h1v1h-1zM675 152h1v1h-1zM675 102h1v1h-1zM675 52h1v1h-1zM675 2h1v1h-1zM725 552h1v1h-1zM725 502h1v1h-1zM725 452h1v1h-1zM725 402h1v1h-1zM725 352h1v1h-1zM725 302h1v1h-1zM725 252h1v1h-1zM725 202h1v1h-1zM725 152h1v1h-1zM725 102h1v1h-1zM725 52h1v1h-1zM725 2h1v1h-1zM775 552h1v1h-1zM775 502h1v1h-1zM775 452h1v1h-1zM775 402h1v1h-1zM775 352h1v1h-1zM775 302h1v1h-1zM775 252h1v1h-1zM775 202h1v1h-1zM775 152h1v1h-1zM775 102h1v1h-1zM775 52h1v1h-1zM775 2h1v1h-1zM825 552h1v1h-1zM825 502h1v1h-1zM825 452h1v1h-1zM825 402h1v1h-1zM825 352h1v1h-1zM825 302h1v1h-1zM825 252h1v1h-1zM825 202h1v1h-1zM825 152h1v1h-1zM825 102h1v1h-1zM825 52h1v1h-1zM825 2h1v1h-1zM875 552h1v1h-1zM875 502h1v1h-1zM875 452h1v1h-1zM875 402h1v1h-1zM875 352h1v1h-1zM875 302h1v1h-1zM875 252h1v1h-1zM875 202h1v1h-1zM875 152h1v1h-1zM875 102h1v1h-1zM875 52h1v1h-1zM875 2h1v1h-1zM925 552h1v1h-1zM925 502h1v1h-1zM925 452h1v1h-1zM925 402h1v1h-1zM925 352h1v1h-1zM925 302h1v1h-1zM925 252h1v1h-1zM925 202h1v1h-1zM925 152h1v1h-1zM925 102h1v1h-1zM925 52h1v1h-1zM925 2h1v1h-1zM975 552h1v1h-1zM975 502h1v1h-1zM975 452h1v1h-1zM975 402h1v1h-1zM975 352h1v1h-1zM975 302h1v1h-1zM975 252h1v1h-1zM975 202h1v1h-1zM975 152h1v1h-1zM975 102h1v1h-1zM975 52h1v1h-1zM975 2h1v1h-1z" fill="#404040"/><rect x="5" y="551" width="41" height="2" fill="#5e0909"/><rect x="24" y="532" width="2" height="40" fill="#5e0909"/><rect x="24" y="551" width="2" height="2" fill="#861212"/><path d="M130 449.20000000000005 L463.5 249 M226.2 497 L374 256.5" stroke="#8a3c38" stroke-width="1.15" fill="none"/><rect x="120.5" y="447.5" width="9" height="9" fill="#c4001e" stroke="#7a3040" stroke-width="1"/><rect x="220.5" y="497.5" width="9" height="9" fill="#c4001e" stroke="#7a3040" stroke-width="1"/><rect x="463.5" y="241.5" width="9" height="9" fill="#0000b4" stroke="#45454f" stroke-width="1"/><rect x="370.5" y="247.5" width="9" height="9" fill="#0000b4" stroke="#3a3a8a" stroke-width="1"/><circle cx="375" cy="252" r="4.500" fill="none" stroke="#b00030" stroke-width="1"/><path d="M371 252 h8 M375 248 v8" stroke="#a00038" stroke-width="1"/></svg></div>
<div id="vscroll" class="abs"><div class="abs" style="left:4px;top:86px;width:8px;height:311.500px;border-radius:4px;background:#7e7e7e"></div></div>
<div id="hscroll" class="abs"><div class="abs" style="left:0;top:0;width:23px;height:16px;background:#ececec"></div><div class="abs" style="left:126.500px;top:4px;width:861.500px;height:8px;border-radius:4px;background:#7e7e7e"></div><div class="abs" style="left:991px;top:0;width:71px;height:16px;background:#ececec"></div><div class="abs" style="left:0;top:14.500px;width:1062px;height:1.500px;background:#e6e6e6"></div><span class="abs" style="left:1011.400px;top:0.500px;font-size:13px;line-height:16px;color:#111;white-space:nowrap">10 &lt; 100</span></div>
<div id="hist" class="abs"><div class="abs" style="left:1046px;top:0;width:16px;height:20px;background:#fafafa"></div><span class="abs" style="left:5.500px;top:0.500px;font-size:13.100px;line-height:16px;color:#0000d0;white-space:nowrap"><i>Command:</i> line</span><div class="abs" style="left:1050px;top:0.500px;width:8px;height:16.500px;border-radius:4px;background:#7e7e7e"></div></div>
<div id="cmd" class="abs"><span class="abs" style="left:1.300px;top:7.200px;font-size:13.100px;line-height:16px;color:#111;white-space:nowrap">Command:</span><div class="abs" style="left:70px;top:5px;width:965px;height:18px;background:#fff"></div><div class="abs" style="left:1035px;top:1.500px;width:26px;height:25.500px;background:linear-gradient(#e6e6e6,#fbfbfb);border:1px solid #b4b4b4"></div><div class="abs" style="left:1041px;top:9px;width:14px;height:10px;background:#eee;border:1px solid #333;border-top:3px solid #000"></div></div>
<div id="tabs" class="abs"><div class="abs" style="left:10px;top:0;width:12px;height:692px;background:#e3e3e3"></div><div class="abs" style="left:0.500px;top:246.500px;width:21.500px;height:114.500px;background:#1a7df9;border-radius:5px 0 0 5px"></div><div class="abs" style="left:0.500px;top:366px;width:21.500px;height:80.500px;background:#dcdcdc;border-radius:5px 0 0 5px"></div><span class="abs" style="left:-45px;top:295.500px;width:113px;height:16px;line-height:16px;text-align:center;font-size:13.300px;color:#fff;white-space:nowrap;transform:rotate(-90deg)">Property Editor</span><span class="abs" style="left:-30px;top:398.500px;width:83px;height:16px;line-height:16px;text-align:center;font-size:13.300px;color:#222;white-space:nowrap;transform:rotate(-90deg)">Layer List</span></div>
<div id="prop" class="abs"><div class="abs" style="left:-1px;top:22px;width:1px;height:669px;background:#cfcfcf"></div><div class="abs" style="left:297px;top:23px;width:1px;height:668px;background:#c9c9c9"></div><div class="abs" style="left:-1px;top:690px;width:299px;height:1px;background:#c9c9c9"></div><div class="abs" style="left:0;top:0;width:298px;height:22.500px;background:linear-gradient(#ececec,#e7e7e7 50%,#d4d4d4);border-bottom:1px solid #c2c2c2"></div><svg class="abs" style="left:1px;top:3px" width="14" height="14" viewBox="0 0 14 14"><circle cx="7" cy="7" r="7" fill="#646464"/><path d="M4.200 4.200 L9.800 9.800 M9.800 4.200 L4.200 9.800" stroke="#ececec" stroke-width="1.900" stroke-linecap="round"/></svg><svg class="abs" style="left:19px;top:3px" width="14" height="14" viewBox="0 0 14 14"><circle cx="7" cy="7" r="7" fill="#646464"/><rect x="5.600" y="3.700" width="5.400" height="4.300" rx=".9" fill="none" stroke="#ececec" stroke-width="1.100"/><rect x="3.100" y="5.900" width="5.400" height="4.300" rx=".9" fill="#646464" stroke="#ececec" stroke-width="1.100"/></svg><span class="abs" style="left:126.4px;top:3.5px;font-size:12px;color:#222;white-space:nowrap;line-height:14px">Property Editor</span><span class="lab" style="left:13px;top:38.5px;font-size:13.500px">Selection:</span><div class="combo" style="left:80.5px;top:35.5px;width:205.0px;height:21.0px"><span style="position:absolute;left:3.300px;top:3.300px;font-size:13.300px">Line [2]</span><div class="cb" style="left:186.5px;top:2.5px"><svg style="position:absolute;left:4px;top:2.500px" width="8" height="11" viewBox="0 0 8 11"><path d="M.9 5.100 L4 2.500 L7.100 5.100 M.9 7.500 L4 10.100 L7.100 7.500" fill="none" stroke="#fff" stroke-width="1.250" stroke-linecap="round" stroke-linejoin="round"/></svg></div></div><span class="gl" style="left:19px;top:61.5px">General Properties</span><div class="gb" style="left:12.400px;top:75.300px;width:273.400px;height:185.400px"></div><span class="lab" style="right:185.4px;top:90.7px">Layer:</span><div class="combo" style="left:115.5px;top:87.5px;width:132.5px;height:21.5px"><span style="position:absolute;left:3.500px;top:6px;width:16px;height:9.500px;border:1px solid #111;background:#fff"></span><span style="position:absolute;left:26px;top:3px">0</span><div class="cb" style="left:114.0px;top:2.75px"><svg style="position:absolute;left:4px;top:2.500px" width="8" height="11" viewBox="0 0 8 11"><path d="M.9 5.100 L4 2.500 L7.100 5.100 M.9 7.500 L4 10.100 L7.100 7.500" fill="none" stroke="#fff" stroke-width="1.250" stroke-linecap="round" stroke-linejoin="round"/></svg></div></div><div class="abs" style="left:251px;top:85px;width:26px;height:26px;background:linear-gradient(#ebebeb,#f7f7f7);border:1px solid #a0a0a0"></div><div class="abs" style="left:257.500px;top:92px;width:13px;height:12px;background:linear-gradient(#7a7a7a 0,#7a7a7a 2px,transparent 2px,transparent 5px,#7a7a7a 5px,#7a7a7a 7px,transparent 7px,transparent 10px,#7a7a7a 10px,#7a7a7a 12px)"></div><span class="lab" style="right:185.4px;top:116.3px">Color:</span><div class="combo" style="left:115.5px;top:113.5px;width:161.0px;height:21.0px"><span style="position:absolute;left:3.500px;top:6px;width:16px;height:9.500px;border:1px solid #111;background:#fff"></span><span style="position:absolute;left:25.400px;top:2.500px">By Layer</span><div class="cb" style="left:142.5px;top:2.5px"><svg style="position:absolute;left:4px;top:2.500px" width="8" height="11" viewBox="0 0 8 11"><path d="M.9 5.100 L4 2.500 L7.100 5.100 M.9 7.500 L4 10.100 L7.100 7.500" fill="none" stroke="#fff" stroke-width="1.250" stroke-linecap="round" stroke-linejoin="round"/></svg></div></div><span class="lab" style="right:185.4px;top:140.7px;letter-spacing:0.14px">Lineweight:</span><div class="combo" style="left:115.5px;top:137.5px;width:161.0px;height:21.0px"><span style="position:absolute;left:4px;top:10px;width:15.500px;height:1px;background:#222"></span><span style="position:absolute;left:25.400px;top:2.500px">By Layer</span><div class="cb" style="left:142.5px;top:2.5px"><svg style="position:absolute;left:4px;top:2.500px" width="8" height="11" viewBox="0 0 8 11"><path d="M.9 5.100 L4 2.500 L7.100 5.100 M.9 7.500 L4 10.100 L7.100 7.500" fill="none" stroke="#fff" stroke-width="1.250" stroke-linecap="round" stroke-linejoin="round"/></svg></div></div><span class="lab" style="right:185.4px;top:164.7px;letter-spacing:0.22px">Linetype:</span><div class="combo" style="left:115.5px;top:161.5px;width:161.0px;height:21.0px"><span style="position:absolute;left:3.300px;top:1.500px">By Layer</span><div class="cb" style="left:142.5px;top:2.5px"><svg style="position:absolute;left:4px;top:2.500px" width="8" height="11" viewBox="0 0 8 11"><path d="M.9 5.100 L4 2.500 L7.100 5.100 M.9 7.500 L4 10.100 L7.100 7.500" fill="none" stroke="#fff" stroke-width="1.250" stroke-linecap="round" stroke-linejoin="round"/></svg></div></div><span class="lab" style="right:185.4px;top:188.3px;letter-spacing:.03px">Linetype Scale:</span><div class="inp" style="left:116px;top:185.0px;width:160.5px;height:20.0px;color:#151515">1</div><span class="lab" style="right:185.4px;top:211.1px">Draw Order:</span><div class="inp" style="left:116px;top:208.0px;width:160.5px;height:20.0px;color:#151515">*VARIES*</div><span class="lab" style="right:185.4px;top:234.1px">Handle:</span><div class="inp" style="left:116px;top:231.0px;width:160.5px;height:20.0px;color:#c2c2c2">*VARIES*</div><span class="gl" style="left:19.6px;top:265.6px;letter-spacing:.1px">Specific Properties</span><div class="gb" style="left:12.400px;top:279.300px;width:273.400px;height:213.400px"></div><span class="lab" style="right:200px;top:291.7px">Length:</span><span class="lab" style="right:200px;top:337.7px">Angle:</span><span class="lab" style="right:200px;top:377.7px">X:</span><span class="lab" style="right:200px;top:400.7px">Y:</span><span class="lab" style="right:200px;top:441.7px">X:</span><span class="lab" style="right:200px;top:464.7px">Y:</span><span class="lab" style="right:200px;top:314.7px">Total Length:</span><div class="inp" style="left:102px;top:311.5px;width:174.5px;height:20.5px;color:#c6c6c6"><span style="font-size:13.500px">138.30951895</span></div><span class="lab" style="left:20.500px;top:358.7px;font-weight:700;font-size:13.500px">Start Point</span><span class="lab" style="left:20.500px;top:422.7px;font-weight:700;font-size:12.900px">End Point</span><div class="pink" style="left:102px;top:290px;width:174px;height:19px"><span style="position:absolute;left:1.500px;top:1.8px">*VARIES*</span></div><div class="pink" style="left:102px;top:336px;width:174px;height:19px"><span style="position:absolute;left:1.500px;top:1.8px">*VARIES*</span></div><div class="pink" style="left:102px;top:377px;width:174px;height:19px"><span style="position:absolute;left:1.500px;top:1.8px">*VARIES*</span></div><div class="pink" style="left:102px;top:400px;width:174px;height:19px"><span style="position:absolute;left:1.500px;top:1.8px">*VARIES*</span></div><div class="pink" style="left:102px;top:441px;width:174px;height:19px"><span style="position:absolute;left:1.500px;top:1.8px">*VARIES*</span></div><div class="pink" style="left:102px;top:464px;width:174px;height:19px"><span style="position:absolute;left:1.500px;top:1.8px">*VARIES*</span></div><div class="hl" style="left:90px;top:288px;width:198px;background:linear-gradient(90deg,rgba(244,52,60,0),rgba(244,52,60,.58) 5.05%,rgba(244,52,60,.58) 94.95%,rgba(244,52,60,0))"></div><div class="hl" style="left:90px;top:309px;width:198px;background:linear-gradient(90deg,rgba(244,52,60,0),rgba(244,52,60,.58) 5.05%,rgba(244,52,60,.58) 94.95%,rgba(244,52,60,0))"></div><div class="vl" style="left:100px;top:278px;height:43px;background:linear-gradient(180deg,rgba(244,52,60,0),rgba(244,52,60,.58) 23.26%,rgba(244,52,60,.58) 76.74%,rgba(244,52,60,0))"></div><div class="vl" style="left:276px;top:278px;height:43px;background:linear-gradient(180deg,rgba(244,52,60,0),rgba(244,52,60,.58) 23.26%,rgba(244,52,60,.58) 76.74%,rgba(244,52,60,0))"></div><div class="hl" style="left:90px;top:334px;width:198px;background:linear-gradient(90deg,rgba(244,52,60,0),rgba(244,52,60,.58) 5.05%,rgba(244,52,60,.58) 94.95%,rgba(244,52,60,0))"></div><div class="hl" style="left:90px;top:355px;width:198px;background:linear-gradient(90deg,rgba(244,52,60,0),rgba(244,52,60,.58) 5.05%,rgba(244,52,60,.58) 94.95%,rgba(244,52,60,0))"></div><div class="vl" style="left:100px;top:324px;height:43px;background:linear-gradient(180deg,rgba(244,52,60,0),rgba(244,52,60,.58) 23.26%,rgba(244,52,60,.58) 76.74%,rgba(244,52,60,0))"></div><div class="vl" style="left:276px;top:324px;height:43px;background:linear-gradient(180deg,rgba(244,52,60,0),rgba(244,52,60,.58) 23.26%,rgba(244,52,60,.58) 76.74%,rgba(244,52,60,0))"></div><div class="hl" style="left:90px;top:375px;width:198px;background:linear-gradient(90deg,rgba(244,52,60,0),rgba(244,52,60,.58) 5.05%,rgba(244,52,60,.58) 94.95%,rgba(244,52,60,0))"></div><div class="hl" style="left:90px;top:396px;width:198px;background:linear-gradient(90deg,rgba(244,52,60,0),rgba(244,52,60,.58) 5.05%,rgba(244,52,60,.58) 94.95%,rgba(244,52,60,0))"></div><div class="vl" style="left:100px;top:365px;height:43px;background:linear-gradient(180deg,rgba(244,52,60,0),rgba(244,52,60,.58) 23.26%,rgba(244,52,60,.58) 76.74%,rgba(244,52,60,0))"></div><div class="vl" style="left:276px;top:365px;height:43px;background:linear-gradient(180deg,rgba(244,52,60,0),rgba(244,52,60,.58) 23.26%,rgba(244,52,60,.58) 76.74%,rgba(244,52,60,0))"></div><div class="hl" style="left:90px;top:398px;width:198px;height:1px;opacity:.45;background:linear-gradient(90deg,rgba(244,52,60,0),rgba(244,52,60,.58) 5.05%,rgba(244,52,60,.58) 94.95%,rgba(244,52,60,0))"></div><div class="hl" style="left:90px;top:399px;width:198px;height:1px;background:linear-gradient(90deg,rgba(244,52,60,0),rgba(244,52,60,.58) 5.05%,rgba(244,52,60,.58) 94.95%,rgba(244,52,60,0))"></div><div class="hl" style="left:90px;top:419px;width:198px;background:linear-gradient(90deg,rgba(244,52,60,0),rgba(244,52,60,.58) 5.05%,rgba(244,52,60,.58) 94.95%,rgba(244,52,60,0))"></div><div class="vl" style="left:100px;top:388px;height:43px;background:linear-gradient(180deg,rgba(244,52,60,0),rgba(244,52,60,.58) 23.26%,rgba(244,52,60,.58) 76.74%,rgba(244,52,60,0))"></div><div class="vl" style="left:276px;top:388px;height:43px;background:linear-gradient(180deg,rgba(244,52,60,0),rgba(244,52,60,.58) 23.26%,rgba(244,52,60,.58) 76.74%,rgba(244,52,60,0))"></div><div class="hl" style="left:90px;top:439px;width:198px;background:linear-gradient(90deg,rgba(244,52,60,0),rgba(244,52,60,.58) 5.05%,rgba(244,52,60,.58) 94.95%,rgba(244,52,60,0))"></div><div class="hl" style="left:90px;top:460px;width:198px;background:linear-gradient(90deg,rgba(244,52,60,0),rgba(244,52,60,.58) 5.05%,rgba(244,52,60,.58) 94.95%,rgba(244,52,60,0))"></div><div class="vl" style="left:100px;top:429px;height:43px;background:linear-gradient(180deg,rgba(244,52,60,0),rgba(244,52,60,.58) 23.26%,rgba(244,52,60,.58) 76.74%,rgba(244,52,60,0))"></div><div class="vl" style="left:276px;top:429px;height:43px;background:linear-gradient(180deg,rgba(244,52,60,0),rgba(244,52,60,.58) 23.26%,rgba(244,52,60,.58) 76.74%,rgba(244,52,60,0))"></div><div class="hl" style="left:90px;top:462px;width:198px;height:1px;opacity:.45;background:linear-gradient(90deg,rgba(244,52,60,0),rgba(244,52,60,.58) 5.05%,rgba(244,52,60,.58) 94.95%,rgba(244,52,60,0))"></div><div class="hl" style="left:90px;top:463px;width:198px;height:1px;background:linear-gradient(90deg,rgba(244,52,60,0),rgba(244,52,60,.58) 5.05%,rgba(244,52,60,.58) 94.95%,rgba(244,52,60,0))"></div><div class="hl" style="left:90px;top:483px;width:198px;background:linear-gradient(90deg,rgba(244,52,60,0),rgba(244,52,60,.58) 5.05%,rgba(244,52,60,.58) 94.95%,rgba(244,52,60,0))"></div><div class="vl" style="left:100px;top:452px;height:43px;background:linear-gradient(180deg,rgba(244,52,60,0),rgba(244,52,60,.58) 23.26%,rgba(244,52,60,.58) 76.74%,rgba(244,52,60,0))"></div><div class="vl" style="left:276px;top:452px;height:43px;background:linear-gradient(180deg,rgba(244,52,60,0),rgba(244,52,60,.58) 23.26%,rgba(244,52,60,.58) 76.74%,rgba(244,52,60,0))"></div><span class="gl" style="left:19.6px;top:498.2px">Custom</span><div class="gb" style="left:12.400px;top:511.300px;width:273.400px;height:52.200px"></div><div class="abs" style="left:249px;top:527px;width:21.500px;height:21.500px;background:#f3f3f3;border:1px solid #a6a6a6"></div><svg class="abs" style="left:254.700px;top:532.700px" width="10" height="10" viewBox="0 0 10 10"><path d="M0.500 5 H9.500 M5 .5 V9.500" stroke="#c40000" stroke-width="2.200"/></svg><div class="abs" style="left:149.5px;top:259.2px;width:79px;height:79px;border-radius:50%;border:4.500px solid rgba(118,150,186,.50);background:rgba(255,255,255,.10);box-shadow:0 0 1.500px .5px rgba(118,150,186,.35), inset 0 0 3px 1.500px rgba(118,150,186,.33)"></div><svg class="abs" style="left:187px;top:297px" width="22" height="32" viewBox="0 0 22 32"><path d="M2 1.500 V23.300 L6.800 19.200 L12 28.600 L15.800 26.700 L10.600 17.400 H17 Z" fill="#fff" stroke="#000" stroke-width="1.500" stroke-linejoin="miter"/></svg></div>
<div id="rtb" class="abs"><div class="abs" style="left:8px;top:8px;width:26px;height:2px;background-image:repeating-linear-gradient(90deg,#a2a2a2 0,#a2a2a2 2px,transparent 2px,transparent 6px)"></div><div class="abs" style="left:2px;top:12.5px;width:44px;height:42.0px;background:#b8b8b8;border-radius:6px 0 0 6px"></div><div class="abs" style="left:2px;top:161.5px;width:44px;height:42.5px;background:#b8b8b8;border-radius:6px 0 0 6px"></div><div class="abs" style="left:2px;top:310.5px;width:44px;height:42.5px;background:#b8b8b8;border-radius:6px 0 0 6px"></div><div class="abs" style="left:3px;top:153px;width:43px;height:1px;background-image:repeating-linear-gradient(90deg,#6e6e6e 0,#6e6e6e 1px,transparent 1px,transparent 3px)"></div><div class="abs" style="left:3px;top:302px;width:43px;height:1px;background-image:repeating-linear-gradient(90deg,#6e6e6e 0,#6e6e6e 1px,transparent 1px,transparent 3px)"></div><svg class="abs" style="left:9px;top:18.8px" width="27" height="28" viewBox="0 0 27 28"><rect x=".5" y=".5" width="26" height="27" fill="#fff" stroke="#2a2a2a" stroke-width="1"/><rect x=".5" y=".5" width="26" height="4.500" fill="#000"/><rect x="1.300" y="1.300" width="2.800" height="2.800" fill="#fff"/><path d="M7 12.500 L9.500 11 V21.500 L7 23 Z" fill="#8a8a8a" stroke="#333" stroke-width=".6"/><path d="M9.500 11 L17.500 8.500 V19.500 L9.500 21.500 Z" fill="#cfcfcf" stroke="#444" stroke-width=".6"/><path d="M11.500 12 L20 9.500 V20.500 L11.500 22.500 Z" fill="#fbfbfb" stroke="#444" stroke-width=".6"/><path d="M13.500 19.500 L17.800 12.500 L18.300 18.500 Z M15 17 h3" fill="none" stroke="#e23" stroke-width="1"/></svg><svg class="abs" style="left:9px;top:65.8px" width="27" height="28" viewBox="0 0 27 28"><rect x=".5" y=".5" width="26" height="27" fill="#fff" stroke="#2a2a2a" stroke-width="1"/><rect x=".5" y=".5" width="26" height="4.500" fill="#000"/><rect x="1.300" y="1.300" width="2.800" height="2.800" fill="#fff"/><rect x="7.500" y="10.500" width="9" height="7" fill="#fdf3c8" stroke="#333" stroke-width=".8"/><circle cx="15.800" cy="17.300" r="4.200" fill="#fdf3c8" fill-opacity=".9" stroke="#333" stroke-width=".8"/></svg><svg class="abs" style="left:9px;top:112.2px" width="27" height="28" viewBox="0 0 27 28"><rect x=".5" y=".5" width="26" height="27" fill="#fff" stroke="#2a2a2a" stroke-width="1"/><rect x=".5" y=".5" width="26" height="4.500" fill="#000"/><rect x="1.300" y="1.300" width="2.800" height="2.800" fill="#fff"/><rect x="5" y="11" width="17" height="10.500" rx="2.200" fill="#f6f6f6" stroke="#c5d2ea" stroke-width="1"/></svg><svg class="abs" style="left:9px;top:167.8px" width="27" height="28" viewBox="0 0 27 28"><rect x=".5" y=".5" width="26" height="27" fill="#fff" stroke="#2a2a2a" stroke-width="1"/><rect x=".5" y=".5" width="26" height="4.500" fill="#000"/><rect x="1.300" y="1.300" width="2.800" height="2.800" fill="#fff"/><g fill="#000"><rect x="3.300" y="8" width="4.300" height="3.200"/><rect x="3.300" y="13.800" width="4.300" height="3.200"/><rect x="3.300" y="19.600" width="4.300" height="3.200"/></g><g fill="#fff" stroke="#222" stroke-width=".8"><rect x="10" y="8" width="13.500" height="3.200"/><rect x="10" y="13.800" width="13.500" height="3.200"/><rect x="10" y="19.600" width="13.500" height="3.200"/></g></svg><svg class="abs" style="left:9px;top:215px" width="27" height="28" viewBox="0 0 27 28"><rect x=".5" y=".5" width="26" height="27" fill="#fff" stroke="#2a2a2a" stroke-width="1"/><rect x=".5" y=".5" width="26" height="4.500" fill="#000"/><rect x="1.300" y="1.300" width="2.800" height="2.800" fill="#fff"/><defs><linearGradient id="gfun" x1="0" y1="0" x2="1" y2="0"><stop offset="0" stop-color="#b4b4b4"/><stop offset="1" stop-color="#5e5e5e"/></linearGradient></defs><ellipse cx="13.500" cy="10" rx="7.500" ry="1.800" fill="#8c8c8c" stroke="#444" stroke-width=".6"/><path d="M6 10.300 Q13.500 13 21 10.300 L15 17 V23 L12.300 21.800 V17 Z" fill="url(#gfun)" stroke="#444" stroke-width=".6"/></svg><svg class="abs" style="left:9px;top:261px" width="27" height="28" viewBox="0 0 27 28"><rect x=".5" y=".5" width="26" height="27" fill="#fff" stroke="#2a2a2a" stroke-width="1"/><rect x=".5" y=".5" width="26" height="4.500" fill="#000"/><rect x="1.300" y="1.300" width="2.800" height="2.800" fill="#fff"/><path d="M3 15.500 h22" stroke="#e9a0a0" stroke-width=".8" stroke-dasharray="2 1"/><path d="M5.500 10 L10.500 12 V20 L5.500 22.500 Z" fill="#fff" stroke="#333" stroke-width=".9"/><rect x="10.500" y="12.200" width="10.500" height="7.600" rx="1.800" fill="#9d9d9d" stroke="#666" stroke-width=".6"/><path d="M12.500 13 v6 M14.500 13 v6 M16.500 13 v6 M18.500 13 v6" stroke="#c9c9c9" stroke-width=".7"/></svg><svg class="abs" style="left:9px;top:316.8px" width="27" height="28" viewBox="0 0 27 28"><rect x=".5" y=".5" width="26" height="27" fill="#fff" stroke="#2a2a2a" stroke-width="1"/><rect x=".5" y=".5" width="26" height="4.500" fill="#000"/><rect x="1.300" y="1.300" width="2.800" height="2.800" fill="#fff"/><g stroke="#555" stroke-width=".9" stroke-dasharray="1.200 .5"><path d="M3 9 h13.500 M3 12 h13 M3 15 h14.500 M3 18 h14.500"/></g><rect x="2" y="21.300" width="23" height="4.700" fill="#fff" stroke="#333" stroke-width=".6"/><path d="M3.500 23.800 h1.500 M8.500 23.800 h15" stroke="#333" stroke-width="1.300" stroke-dasharray="1.300 .4"/></svg><svg class="abs" style="left:9px;top:364.2px" width="27" height="28" viewBox="0 0 27 28"><rect x=".5" y=".5" width="26" height="27" fill="#fff" stroke="#2a2a2a" stroke-width="1"/><rect x=".5" y=".5" width="26" height="4.500" fill="#000"/><rect x="1.300" y="1.300" width="2.800" height="2.800" fill="#fff"/><rect x="7.500" y="9.500" width="12.500" height="14.500" rx="1" fill="#c78d45" stroke="#8a5b22" stroke-width=".8"/><rect x="9.300" y="11.800" width="9" height="10.800" fill="#f4f4f4"/><path d="M10.800 14.500 h6 M10.800 16.800 h6 M10.800 19.100 h4" stroke="#bbb" stroke-width=".8"/><path d="M18.300 19.600 v3 h-3 Z" fill="#999"/><rect x="11.300" y="8" width="5" height="2.800" rx=".8" fill="#a9a9a0" stroke="#66665e" stroke-width=".6"/></svg></div>
<div id="status" class="abs"><span class="abs st" style="left:2px;top:7.500px">166,47.8</span><span class="abs st" style="left:2px;top:28px">@96,-12.2</span>
<div class="abs" style="left:253px;top:3.500px;width:1px;height:39px;background:#8a8a8a"></div><div class="abs" style="left:254px;top:3.500px;width:1px;height:39px;background:#e8e8e8"></div>
<span class="abs st" style="left:256px;top:7.500px">172.745&lt;16°</span><span class="abs st" style="left:256px;top:28px">@96.7721&lt;353°</span>
<div class="abs dot" style="left:506px;top:19px"></div>
<span class="abs st st2" style="left:480px;top:12px;width:219px;text-align:right">Select entity or region</span><span class="abs st st2" style="left:480px;top:23px;width:219px;text-align:right">Move entity or reference</span>
<svg class="abs" style="left:716px;top:6px" width="20" height="32" viewBox="0 0 20 32"><rect x="1.400" y="1.300" width="17.200" height="29.200" rx="8.600" fill="#fff" stroke="#3a3a3a" stroke-width=".9"/><path d="M1.500 14.300 Q10 12.300 18.500 14.300" fill="none" stroke="#3a3a3a" stroke-width=".9"/><path d="M10 10 V13.300" stroke="#3a3a3a" stroke-width=".9"/><rect x="8.300" y="3.300" width="3.400" height="6.900" rx="1.700" fill="#fff" stroke="#3a3a3a" stroke-width=".9"/><path d="M10 1.500 v2" stroke="#3a3a3a" stroke-width=".9"/></svg>
<div class="abs dot" style="left:940px;top:19px"></div>
<span class="abs st st2" style="left:949px;top:12px">Selected entities:</span><span class="abs st st2" style="left:949px;top:23px">2 Lines on Layer "0".</span>
<div class="abs dot" style="left:1269px;top:19px"></div></div>
</div>
</body>
</html>
